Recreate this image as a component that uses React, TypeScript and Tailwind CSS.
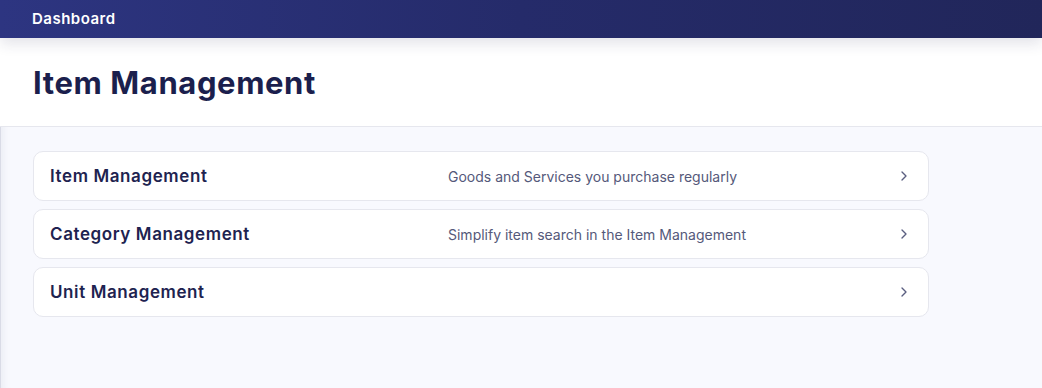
import React from 'react';
import { ChevronRight } from 'lucide-react';

const items = [
  { title: 'Item Management', desc: 'Goods and Services you purchase regularly' },
  { title: 'Category Management', desc: 'Simplify item search in the Item Management' },
  { title: 'Unit Management', desc: '' },
];

export default function App() {
  return (
    <div className="min-h-screen bg-[#f8f9fe] font-['Inter',sans-serif] shadow-[inset_1px_0_0_#d9dbe6,inset_10px_0_10px_-8px_rgba(30,35,80,0.08)]">
      <header className="relative z-10 h-[38px] flex items-center px-8 bg-gradient-to-r from-[#2d3581] via-[#252b6a] to-[#21265a] shadow-[0_6px_14px_rgba(30,35,80,0.12)]">
        <span className="text-white text-[15px] font-semibold tracking-[0.5px]">Dashboard</span>
      </header>

      <div className="bg-white border-b border-[#e6e7ee] h-[89px] flex items-center px-[33px]">
        <h1 className="text-[31px] font-bold text-[#1b1f4d] tracking-[0.6px] pt-[2px]">Item Management</h1>
      </div>

      <div className="pl-[33px] pt-6 flex flex-col gap-2 w-[929px]">
        {items.map((item) => (
          <div
            key={item.title}
            className="h-[50px] bg-white border border-[#e6e7ee] rounded-[10px] flex items-center px-4"
          >
            <div className="w-[398px] text-[17px] font-semibold text-[#1e2350] tracking-[0.6px] pt-[2px]">{item.title}</div>
            <div className="flex-1 text-[14px] text-[#55597a]">{item.desc}</div>
            <ChevronRight className="w-4 h-4 text-[#5a5e80]" strokeWidth={2} />
          </div>
        ))}
      </div>
    </div>
  );
}
